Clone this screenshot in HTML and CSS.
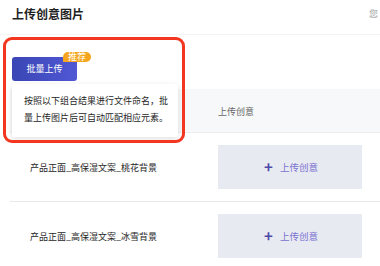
FILE: index.html
```html
<!DOCTYPE html>
<html lang="zh">
<head>
<meta charset="utf-8">
<link rel="stylesheet" href="styles.css">
</head>
<body>
<div class="page">
  <div class="title-row">
    <h1 class="title">上传创意图片</h1>
    <span class="hint">您</span>
  </div>
  <div class="toolbar">
    <button class="batch-btn">批量上传<span class="badge">推荐</span></button>
  </div>
  <div class="table">
    <div class="thead">
      <div class="cell name"></div>
      <div class="cell th">上传创意</div>
    </div>
    <div class="row">
      <div class="cell name">产品正面_高保湿文案_桃花背景</div>
      <div class="cell"><button class="upload-btn"><span class="plus">+</span>上传创意</button></div>
    </div>
    <div class="row">
      <div class="cell name">产品正面_高保湿文案_冰雪背景</div>
      <div class="cell"><button class="upload-btn"><span class="plus">+</span>上传创意</button></div>
    </div>
  </div>
  <div class="tooltip">按照以下组合结果进行文件命名，批量上传图片后可自动匹配相应元素。</div>
  <div class="highlight"></div>
</div>
</body>
</html>
```
FILE: styles.css
```css
* { box-sizing: border-box; }
html, body { margin: 0; padding: 0; }
body {
  width: 380px;
  height: 266px;
  overflow: hidden;
  background: #fff;
  font-family: "Noto Sans CJK SC", "Noto Sans", sans-serif;
  color: #222;
}
.page { position: relative; width: 380px; height: 266px; }
.title-row {
  display: flex;
  align-items: center;
  height: 34px;
  padding: 0 0 0 12px;
  white-space: nowrap;
  overflow: hidden;
}
.title {
  margin: -7px 0 0 0;
  font-size: 12px;
  line-height: 16px;
  font-weight: 700;
  color: #1f1f1f;
  width: 357px;
  flex: none;
}
.hint {
  margin-top: -8px;
  font-size: 9px;
  color: #9a9a9a;
  flex: none;
}
.toolbar {
  height: 55px;
  border-top: 1px solid #f4f4f4;
  padding: 18px 0 0 12px;
}
.batch-btn {
  position: relative;
  width: 65px;
  height: 24px;
  border: none;
  border-radius: 3px;
  background: linear-gradient(90deg, #3946b4, #5158d4);
  color: #fff;
  font-family: inherit;
  font-size: 9px;
  padding: 0;
}
.badge {
  position: absolute;
  left: 51px;
  top: -5px;
  height: 10px;
  line-height: 10px;
  padding: 0 5px;
  border-radius: 6px 6px 6px 0;
  background: #f6a51e;
  color: #fff;
  font-size: 9px;
  white-space: nowrap;
}
.table { margin-left: 10px; }
.thead, .row {
  display: grid;
  grid-template-columns: 208px 144px;
  align-items: center;
}
.thead {
  height: 44px;
  background: #f7f8fa;
  border-bottom: 1px solid #ececec;
  margin-right: -10px;
}
.th { font-size: 9px; color: #666; padding-top: 1px; }
.row {
  height: 69px;
  border-bottom: 1px solid #e8e8e8;
}
.name {
  padding-left: 20px;
  font-size: 9px;
  color: #262626;
}
.upload-btn {
  width: 144px;
  height: 44px;
  border: none;
  background: #e8eaf2;
  font-family: inherit;
  font-size: 9.5px;
  color: #7a72cf;
  display: flex;
  align-items: center;
  justify-content: center;
  padding: 0 0 0 2px;
}
.plus {
  font-size: 15px;
  font-weight: 700;
  color: #4f4aa8;
  margin-right: 7px;
  line-height: 1;
  margin-top: -2px;
}
.tooltip {
  position: absolute;
  left: 12px;
  top: 84px;
  width: 166px;
  height: 53px;
  padding: 8px 10px 0 12px;
  background: #fff;
  box-shadow: 0 2px 6px rgba(0,0,0,0.12);
  border-radius: 2px;
  font-size: 9px;
  line-height: 17px;
  color: #262626;
}
.highlight {
  position: absolute;
  left: 3px;
  top: 37px;
  width: 182px;
  height: 106px;
  border: 3px solid #f2361f;
  border-radius: 9px;
}
```
